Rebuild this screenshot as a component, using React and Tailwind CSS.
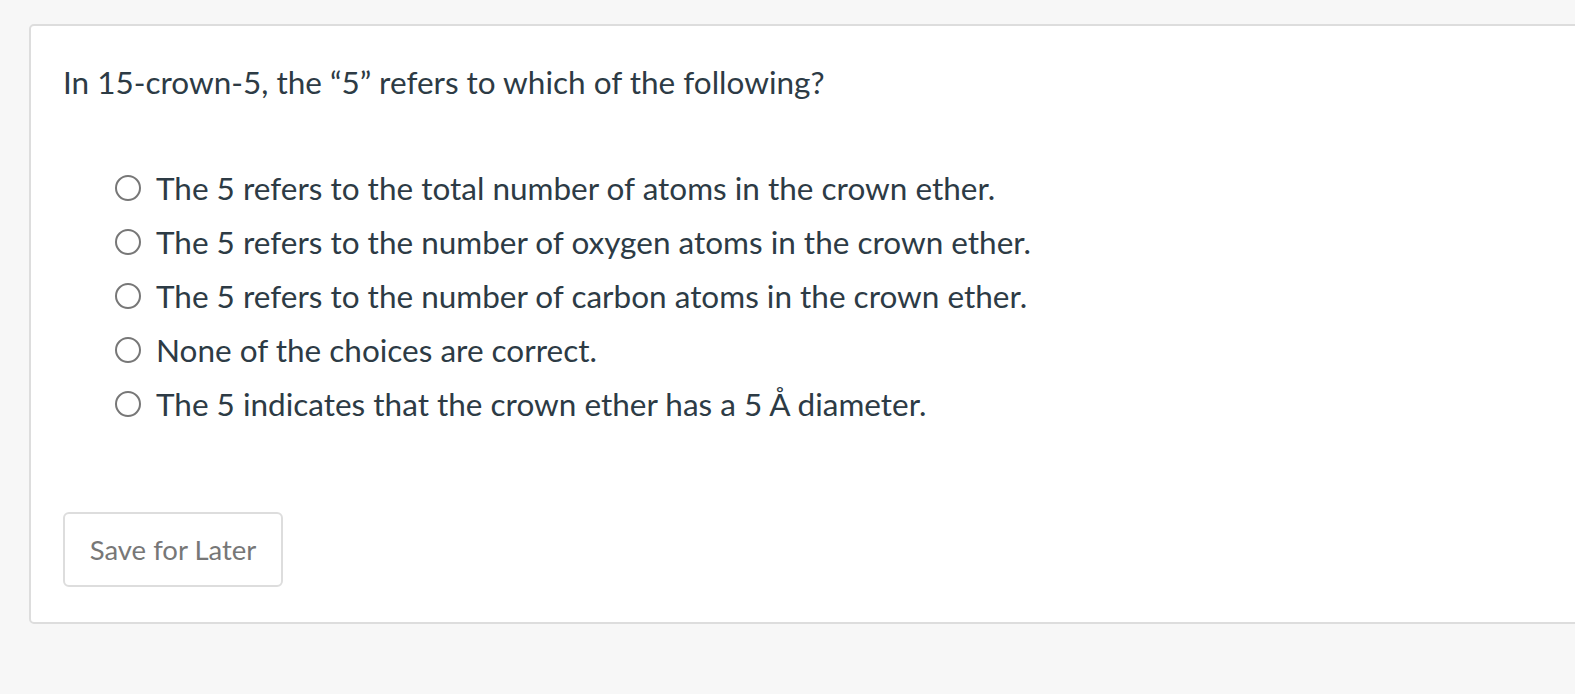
export default function App() {
  const options = [
    "The 5 refers to the total number of atoms in the crown ether.",
    "The 5 refers to the number of oxygen atoms in the crown ether.",
    "The 5 refers to the number of carbon atoms in the crown ether.",
    "None of the choices are correct.",
    "The 5 indicates that the crown ether has a 5 Å diameter.",
  ];
  return (
    <div className="w-[1575px] h-[694px] bg-[#f7f7f7] overflow-hidden pt-[24px] pl-[29px]" style={{ fontFamily: "Lato, 'Open Sans', sans-serif" }}>
      <div className="w-[1600px] h-[600px] bg-white border-2 border-[#dddddd] rounded-[5px] pl-[32px] pt-[38px]">
        <div className="text-[31.5px] leading-[36px] text-[#2d3b45]">
          In 15-crown-5, the “5” refers to which of the following?
        </div>
        <div className="mt-[70px] pl-[52px] flex flex-col gap-[18px]">
          {options.map((o, i) => (
            <div key={i} className="flex items-center h-[36px] gap-[15px]">
              <span className="w-[26px] h-[26px] rounded-full border-2 border-[#777777] bg-white shrink-0" />
              <span className="text-[31.5px] leading-[36px] text-[#2d3b45]">{o}</span>
            </div>
          ))}
        </div>
        <button className="mt-[90px] w-[220px] h-[75px] border-2 border-[#dddddd] rounded-[6px] bg-white text-[27.5px] text-[#777777]">
          Save for Later
        </button>
      </div>
    </div>
  );
}
